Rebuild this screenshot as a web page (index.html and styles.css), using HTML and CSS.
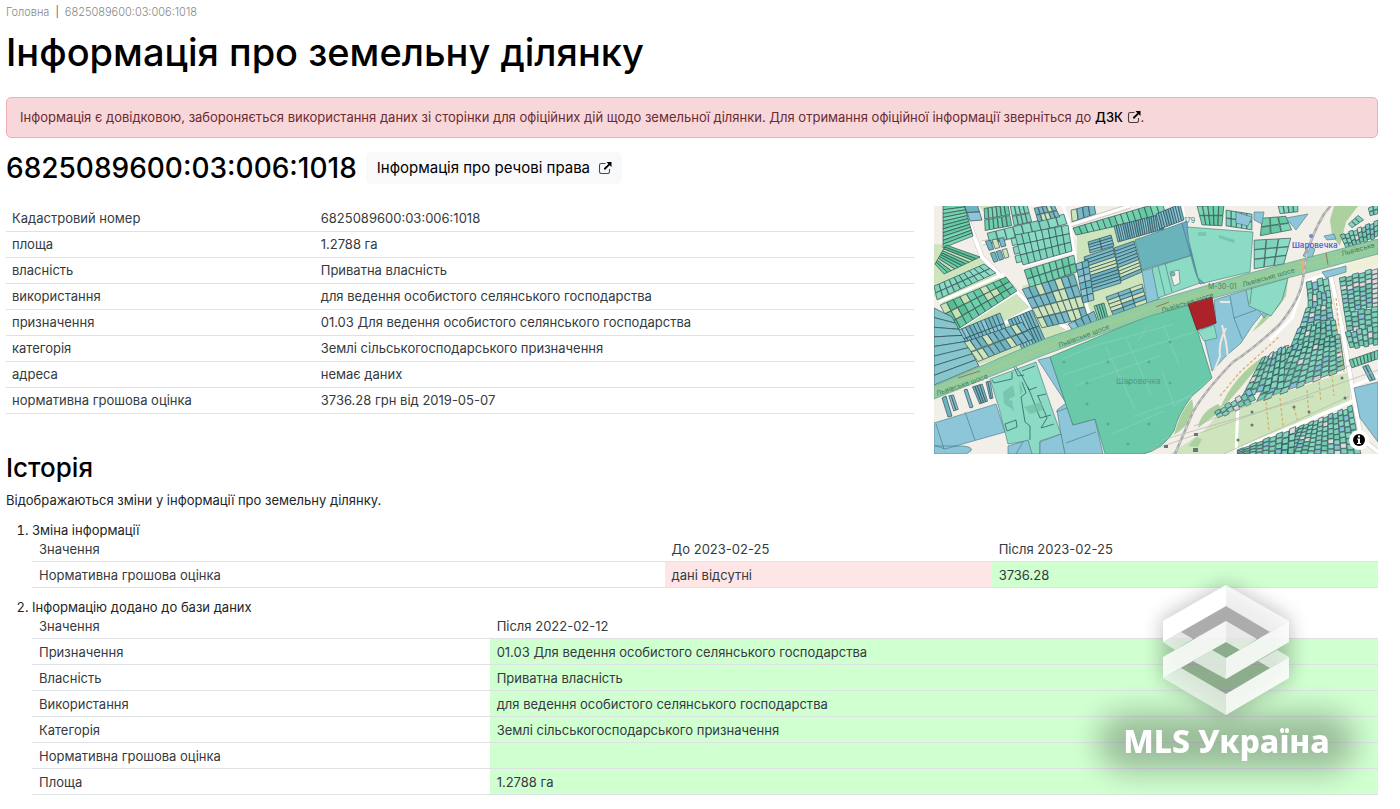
FILE: index.html
```html
<!DOCTYPE html>
<html lang="uk">
<head>
<meta charset="utf-8">
<title>Інформація про земельну ділянку</title>
<link rel="stylesheet" href="styles.css">
</head>
<body>
<svg class="sprite" aria-hidden="true"><symbol id="external" viewBox="0 0 14 14"><path d="M7.5 2.500H3.200Q1.500 2.500 1.500 4.200V10.800Q1.500 12.500 3.200 12.500H9.800Q11.500 12.500 11.500 10.800V8" fill="none" stroke="currentColor" stroke-width="1.100" opacity=".7"/><path d="M8.500 1H13.500V6L11.700 4.200L7 8.900L5.700 7.600L10.400 2.900Z" fill="currentColor"/></symbol></svg>
<nav class="crumbs"><a href="#">Головна</a><span class="bar">|</span><span>6825089600:03:006:1018</span></nav>
<main>
<h1>Інформація про земельну ділянку</h1>
<div class="alert" role="alert">Інформація є довідковою, забороняється використання даних зі сторінки для офіційних дій щодо земельної ділянки. Для отримання офіційної інформації зверніться до <a href="#">ДЗК <svg class="ext"><use href="#external"/></svg></a>.</div>
<div class="heading"><h2>6825089600:03:006:1018</h2><a class="button" href="#">Інформація про речові права <svg class="ext"><use href="#external"/></svg></a></div>
<div class="overview">
<div class="col">
<table class="facts">
<tr><th scope="row">Кадастровий номер</th><td>6825089600:03:006:1018</td></tr>
<tr><th scope="row">площа</th><td>1.2788 га</td></tr>
<tr><th scope="row">власність</th><td>Приватна власність</td></tr>
<tr><th scope="row">використання</th><td>для ведення особистого селянського господарства</td></tr>
<tr><th scope="row">призначення</th><td>01.03 Для ведення особистого селянського господарства</td></tr>
<tr><th scope="row">категорія</th><td>Землі сільськогосподарського призначення</td></tr>
<tr><th scope="row">адреса</th><td>немає даних</td></tr>
<tr><th scope="row">нормативна грошова оцінка</th><td>3736.28 грн від 2019-05-07</td></tr>
</table>
</div>
<div class="col">
<div class="map">
<svg class="canvas" viewBox="0 0 444 248" preserveAspectRatio="xMidYMid slice" role="img" aria-label="Карта земельних ділянок">
<rect width="444" height="248" fill="#f2efe9"/>
<g fill="#cde4bd">
<path d="M0 38L12 39L48 51L99 102L133 122L113 138L40 160L20 110L0 90Z"/>
<path d="M143 28L200 10L226 94L150 124L136 112L128 90L100 100L88 80L143 66Z"/>
<path d="M286 206L319 197L403 169L416 166L416 194L359 219L303 242L290 248H236L269 226Z"/>
<path d="M44 -1H60L50 6Z"/><path d="M400 72L396 66L444 48V58L410 68Z" fill="#eef0d5"/>
</g>
<g fill="#add19e">
<path d="M400 0H424L412 16L406 40L398 30L396 14Z"/><path d="M354 74L352 90Q340 110 318 126Q340 98 346 80Z"/>
<path d="M286 202Q300 170 330 150L326 158Q300 190 290 200Z"/><path d="M258 193Q264 214 240 229Q246 205 258 193ZM264 222Q266 206 284 198L290 204Q276 212 264 222ZM254 240L262 231L268 233L264 241Z"/>
</g>
<g fill="none" stroke="#fff" stroke-linejoin="round">
<g stroke="#cfc8c2" stroke-width="5"><path d="M28 -2L48 51L99 102L133 122"/><path d="M48 37L136 19L196 0"/><path d="M396 67L408 121L419 186L427 232L444 246"/></g>
<g stroke-width="4"><path d="M28 -2L48 51L99 102L133 122M99 102L71 117"/><path d="M396 67L408 121L419 186L427 232L444 246"/></g>
<g stroke-width="3"><path d="M48 37L136 19L196 0M129 0L136 20L143 67L158 117M88 60L140 45M5 96L70 68M20 125L84 85M248 0L254 40M444 33L396 67L370 76L358 112L336 134M419 180L444 170M303 244L419 195M302 248L304 198M329 184L334 150"/></g>
</g>
<g id="parcels" stroke="#26434a" stroke-width=".7" stroke-opacity=".9"></g>
<g stroke="#46727c" stroke-width=".6" fill="#8cc6d8">
<path d="M201 34L248 17L259 49L208 64Z" fill="#69b4ba"/><path d="M208 65L219 62L225 93L213 97Z"/>
<path d="M218 62L259 49L266 77L224 92Z" fill="#8cdbc4"/><path d="M224 60L231 89M231 57L238 86" fill="none"/>
<path d="M236 66L245 64L246 77L240 80Z" fill="#f2efe9"/><circle cx="239" cy="68" r="2" fill="#6ac9a9"/>
<path d="M248 17L253 15L257 46L264 70L271 77L266 78L261 65Z" fill="#6da9c6"/>
<path d="M253 21L319 26L316 66L270 77L264 72L255 36Z" fill="#8cdbc4"/>
<path d="M280 94L312 84L330 112L345 92L350 80L318 120L307 137L292 150L278 165L268 123L282 117Z"/>
<path d="M312 84L354 72L348 94L337 110L315 100Z" fill="#8cdbc4"/>
<path d="M296 90L300 112L322 104M300 112L308 133M318 80L316 98" fill="none"/>
<path d="M0 217L62 198L71 226L11 243L0 239ZM31 206L41 234M2 218L10 243M0 240H30Q44 242 32 248H0Z"/>
<path d="M104 154L116 151L139 219L161 213L169 248H130L123 204L132 197ZM132 237L162 226M122 206L133 202"/>
<path d="M56 173L102 156L117 200L127 228L106 235V248H97L93 235L74 238L65 202Z" fill="#8cdbc4"/><path d="M74 240L94 234L98 248H74ZM82 248L89 236M106 236L127 228L131 248H106Z"/>
<path d="M420 182L444 176V212L444 236L426 212Z"/>
<path d="M320 6H330L328 18L320 14ZM352 12L374 8L362 24ZM369 50L374 40L381 43L378 52ZM390 30L400 28L402 33L393 34ZM302 6L318 11L314 20L302 17ZM388 66L412 60V66L392 72Z"/>
</g>
<g fill="none" stroke="#2d6463" stroke-width=".8"><path d="M58 174L60 177L78 173V166M80 161L84 170L90 169M80 158L88 170M88 170L95 184L103 181M88 176L92 187L87 191L91 216L96 220L96 234M94 181L106 212L117 209M104 190L113 212L107 222L120 218M103 190L112 188M88 165L101 160M71 218L82 214L83 221L73 225Z"/></g>
<g fill="#70bda5" opacity=".7"><path d="M69 186L79 179L81 190L75 193L80 204L70 198ZM85 174L89 185L86 189ZM90 201L108 196L109 204L96 208ZM72 196L78 194L80 206ZM285 29L301 34L300 37L285 32ZM264 26H272V30H264Z"/></g>
<path d="M116 151L216 109L254 98L263 123L278 172Q270 180 258 190Q244 208 240 225Q228 244 209 248H171L161 213L139 219Z" fill="#6ac9a9" stroke="#47867a" stroke-width=".7"/>
<g stroke="#9bdcc6" stroke-width=".6" fill="none" opacity=".7"><path d="M128 153L160 140L240 118M129 169L260 126M140 180L225 150M171 140L201 203M192 132L217 188M204 136L213 120M178 228L230 205M201 210L258 190M230 120L245 160M228 165L240 200L276 174"/></g>
<g fill="#54ad91"><circle cx="130" cy="156" r="1.500"/><circle cx="153" cy="177" r="1.500"/><circle cx="174" cy="156" r="1.500"/><circle cx="195" cy="177" r="1.500"/><circle cx="153" cy="198" r="1.500"/><circle cx="174" cy="218" r="1.500"/><circle cx="215" cy="156" r="1.500"/><circle cx="236" cy="177" r="1.500"/><circle cx="236" cy="136" r="1.500"/><circle cx="215" cy="218" r="1.500"/><circle cx="194" cy="238" r="1.500"/></g>
<path d="M0 180L113 132L216 96L316 67L444 33V48L316 82L216 110L113 148L0 193Z" fill="#90cda3" stroke="#5f9177" stroke-width=".6"/>
<path d="M0 186L113 140L216 103L316 74L444 40" fill="none" stroke="#a4cc8f" stroke-width="3" opacity=".7"/>
<path d="M366 57L370 56L368 66" fill="none" stroke="#e9b36b" stroke-width="2"/><path d="M24 172L46 165M222 101L235 96M392 47L394 59" fill="none" stroke="#8b6549" stroke-width=".8"/>
<path d="M398 -2L390 8Q378 28 373 48L368 78Q364 96 345 119Q318 144 299 156Q270 186 259 206L241 248" fill="none" stroke="#aaa" stroke-width="2.500"/>
<path d="M398 -2L390 8Q378 28 373 48L368 78Q364 96 345 119Q318 144 299 156Q270 186 259 206L241 248" fill="none" stroke="#dedede" stroke-width="1" stroke-dasharray="4 4"/>
<path d="M254 98L278 91L282 117L263 124Z" fill="#ab2328" stroke="#6a2125" stroke-width=".8"/>
<path d="M264 125L280 119L283 132L270 135Z" fill="#8cdbc4" stroke="#47867a" stroke-width=".6"/>
<path d="M292 122Q284 138 286 150L280 165M288 119L292 136L294 152M286 96H296" fill="none" stroke="#eee7db" stroke-width="2"/>
<g fill="none" stroke="#b5b9aa" stroke-width=".7"><path d="M218 244L444 164M260 220L420 158M228 234L380 190M290 248L416 190"/></g>
<g fill="none" stroke="#dcad65" stroke-width="1.200" stroke-dasharray="3 2"><path d="M332 196L335 226M346 192L349 220M360 202L364 216M373 184L375 210M385 176L387 196M398 168L400 190M402 120L410 166M286 190L306 166L346 130M402 92L405 121"/></g>
<g fill="#66757a"><circle cx="318" cy="206" r="1.500"/><circle cx="318" cy="219" r="1.500"/><circle cx="360" cy="201" r="1.500"/><circle cx="375" cy="206" r="1.500"/><circle cx="408" cy="172" r="1.500"/><circle cx="411" cy="192" r="1.500"/><circle cx="304" cy="234" r="1.500"/><path d="M260 227h4v3h-4zM230 239h4v3h-4zM259 242h5v4h-5z"/></g>
<g class="place"><text x="358" y="42" class="station">Шаровечка</text><text x="182" y="178" class="village">Шаровечка</text><text x="274" y="83">М-30-01</text><text x="250" y="17">179</text></g>
<g class="street"><text transform="translate(3 190) rotate(-19)">Львівське шосе</text><text transform="translate(125 142) rotate(-21)">Львівське шосе</text><text transform="translate(228 107) rotate(-17)">Львівське шосе</text><text transform="translate(309 81) rotate(-16)">Львівське шосе</text><text transform="translate(408 50) rotate(-15)">Львівське</text></g>
<circle cx="377" cy="30" r="2" fill="#7785dc"/>
</svg>
<button class="info" type="button" aria-label="Про карту"><svg viewBox="0 0 20 20"><circle cx="10" cy="10" r="6"/><path d="M9 5.500h2v2H9zM8 8.500h3v4.500h1v1H8v-1h1V9.500H8z" fill="#fff"/></svg></button>
</div>
</div>
</div>
<section class="history">
<h3>Історія</h3>
<p>Відображаються зміни у інформації про земельну ділянку.</p>
<ol>
<li><div class="title">Зміна інформації</div>
<table class="three">
<tr><th scope="col">Значення</th><th scope="col">До 2023-02-25</th><th scope="col">Після 2023-02-25</th></tr>
<tr><td>Нормативна грошова оцінка</td><td class="old">дані відсутні</td><td class="new">3736.28</td></tr>
</table></li>
<li><div class="title">Інформацію додано до бази даних</div>
<table class="two">
<tr><th scope="col">Значення</th><th scope="col">Після 2022-02-12</th></tr>
<tr><td>Призначення</td><td class="new">01.03 Для ведення особистого селянського господарства</td></tr>
<tr><td>Власність</td><td class="new">Приватна власність</td></tr>
<tr><td>Використання</td><td class="new">для ведення особистого селянського господарства</td></tr>
<tr><td>Категорія</td><td class="new">Землі сільськогосподарського призначення</td></tr>
<tr><td>Нормативна грошова оцінка</td><td class="new"></td></tr>
<tr><td>Площа</td><td class="new">1.2788 га</td></tr>
</table></li>
</ol>
</section>
</main>
<aside class="brand">
<svg class="mark" viewBox="0 0 310 160" aria-hidden="true">
<path class="glow" d="M136 14L200 50V108L136 145L72 108V50Z"/>
<path d="M136 36L181 62L167 69L136 51L103 69L91 62ZM122 80L136 72L150 80L136 88ZM91 98L103 91L136 109L168 91L180 98L136 124Z" opacity=".1"/>
<g fill="#fff">
<path d="M136 15V36L73 72V51Z"/>
<path d="M136 15V36L180 62L199 51Z" opacity=".72"/>
<path d="M199 51V72L136 109V88Z" opacity=".85"/>
<path d="M136 51V72L73 108V87Z" opacity=".85"/>
<path d="M73 72L91 62L103 69L85 80Z" opacity=".6"/>
<path d="M136 51L167 69L150 80L136 72Z" opacity=".65"/>
<path d="M122 80L136 88V109L103 91Z" opacity=".6"/>
<path d="M187 80L199 87L180 98L168 91Z" opacity=".6"/>
<path d="M73 108L91 98L136 124V145Z" opacity=".6"/>
<path d="M199 87V108L136 145V124Z" opacity=".85"/>
</g>
</svg>
<div class="name">MLS Україна</div>
</aside>
<script src="map.js"></script>
</body>
</html>
```
FILE: styles.css
```css
* { box-sizing: border-box; }
body { margin: 0; padding: 4px 22px 12px 6px; background: #fff; color: #343a40; font: 400 13px/18px Inter, "Noto Sans", sans-serif; }
a { color: inherit; text-decoration: none; }
h1, h2, h3 { margin: 0; font-weight: 500; color: #000; }
p, ol { margin: 0; color: #212529; }
.sprite { display: none; }
.crumbs { font-size: 11px; font-weight: 300; line-height: 16px; color: #888; }
.bar { margin: 0 6px; color: #333; }
h1 { margin-top: 8px; font-size: 38px; line-height: 48px; }
.alert { margin-top: 21px; padding: 10px 13px; border: 1px solid #f1aeb5; border-radius: 5px; background: #f8d7da; color: #6a2b32; line-height: 19px; }
.alert a { color: #000; font-weight: 500; }
.ext { width: 14px; height: 14px; vertical-align: -2px; }
.heading { display: flex; align-items: center; gap: 9px; margin-top: 14px; }
h2 { font-size: 28px; line-height: 32px; }
.button { padding: 7px 10px 7px 11px; border-radius: 5px; background: #f8f9fa; color: #000; font-size: 15px; line-height: 18px; }
.button .ext { margin-left: 4px; }
.overview { display: grid; grid-template-columns: 2fr 1fr; margin: 22px -20px 0 0; }
.col { padding-right: 20px; min-width: 0; }
table { width: 100%; border-collapse: separate; border-spacing: 0; table-layout: fixed; }
th, td { height: 26px; padding: 3px 7px; border-bottom: 1px solid #dee2e6; text-align: left; font-weight: 400; line-height: 18px; color: #343a40; }
.facts th, .facts td { padding: 2px 6px 4px; }
.facts th { width: 34%; }
.map { position: relative; height: 248px; overflow: hidden; }
.canvas { display: block; width: 100%; height: 100%; }
.info { position: absolute; right: 9px; bottom: 4px; width: 20px; height: 20px; padding: 0; border: 0; border-radius: 50%; background: #fff; }
.info svg { display: block; width: 20px; height: 20px; }
.place, .street { font: 7px Inter, sans-serif; fill: #4b8270; }
.place .station { fill: #5263ce; font-weight: 600; font-size: 8px; }
.place .village { fill: #4d9d87; font-size: 8px; }
.street { fill: #3f8062; }
.history h3 { margin-top: -2px; font-size: 26px; line-height: 32px; }
.history p { margin-top: 7px; line-height: 18px; }
ol { padding-left: 26px; margin-top: 12px; }
li { margin-bottom: 10px; }
.title { line-height: 12px; }
.three th:first-child { width: 47%; }
.three th:nth-child(2) { width: 24.3%; }
.two th:first-child { width: 34%; }
.old { background: #ffe6e6; }
.new { background: #d0ffd0; }
.brand { position: fixed; right: 0; bottom: 0; width: 310px; height: 239px; pointer-events: none; }
.mark { display: block; width: 100%; overflow: visible; }
.glow { fill: #000; opacity: .25; filter: blur(10px); }
.name { position: relative; margin: -7px 37px 0 0; color: #fff; text-align: center; font: 800 32px/36px "Noto Sans", sans-serif; }
.name::before { content: ""; position: absolute; z-index: -1; inset: -10px 8px -12px 8px; border-radius: 40px; background: #000; opacity: .26; filter: blur(15px); }
```
FILE: map.js
```js
const teal = ['#8cdbc4', '#7fd3bb', '#86d8c1'];
const mixed = ['#7fd3bb', '#73cbb2', '#86d8c1', '#7fd3bb', '#73cbb2', '#86d8c1', '#7fd3bb', '#73cbb2', '#86d8c1', '#84bfd8', '#dcdcd8'];
const green = ['#70d0ab', '#7ed6b5', '#65c9a2'];
const blue = ['#79b9c8', '#6fb2c0', '#8cc6d8'];
const leaf = ['#70d0ab', '#65c9a2', '#c9e2b5', '#55bf92'];
const gaps = ['#79b9c8', '#6fb2c0', '#cde4bd', '#79b9c8'];

// Corners clockwise from the top left, then columns, rows, colours and the inset between parcels.
const blocks = [
  [[9,0,30,-2,39,30,9,42], 1, 11, green, 0],
  [[30,-2,43,-2,48,14,36,15], 1, 2, blue, 0],
  [[50,2,74,-2,78,20,51,25], 6, 2, green, 0.04],
  [[76,0,93,-2,98,16,80,20], 4, 2, teal, 0.04],
  [[53,27,130,8,133,18,56,38], 9, 1, teal, 0.02],
  [[50,34,70,30,76,52,60,58], 3, 2, gaps, 0.12],
  [[76,32,84,30,90,56,82,58], 1, 3, teal, 0.1],
  [[81,29,134,19,138,45,89,59], 8, 3, teal, 0],
  [[90,64,140,49,143,66,96,82], 8, 2, green, 0.02],
  [[100,2,120,-2,126,11,104,16], 5, 2, gaps, 0.04],
  [[137,4,160,-2,162,8,138,16], 4, 1, gaps, 0.02],
  [[1,58,12,39,46,51,10,68], 10, 1, leaf, 0],
  [[0,80,50,58,62,67,3,94], 10, 2, teal, 0.02],
  [[6,99,72,71,83,85,20,126], 10, 3, leaf, 0.02],
  [[20,126,66,107,74,128,30,143], 12, 2, blue, 0],
  [[74,114,98,104,112,136,88,143], 8, 2, blue, 0],
  [[0,102,18,111,45,160,0,179], 1, 8, ['#88c6ce'], 0],
  [[30,136,88,116,100,133,44,156], 10, 2, gaps, 0.03],
  [[88,83,140,68,154,112,108,122], 8, 4, gaps, 0.02],
  [[139,22,228,-4,232,9,142,29], 15, 1, green, 0],
  [[180,20,228,8,230,23,184,36], 22, 1, blue, 0],
  [[154,36,177,29,180,40,156,47], 2, 4, blue, 0],
  [[150,51,179,41,187,77,158,86], 1, 11, gaps, 0],
  [[180,42,200,35,208,66,187,75], 1, 10, gaps, 0],
  [[142,58,154,54,160,94,149,97], 2, 6, blue, 0],
  [[172,91,208,78,213,97,179,109], 3, 5, gaps, 0],
  [[160,100,170,97,174,112,165,115], 4, 1, green, 0],
  [[134,118,160,105,164,116,140,126], 4, 1, blue, 0.02],
  [[222,8,246,-2,250,14,226,23], 10, 1, blue, 0],
  [[263,0,290,-1,288,20,268,19], 5, 2, green, 0.02],
  [[292,4,318,8,318,24,292,20], 5, 2, teal, 0.02],
  [[328,12,352,10,358,24,326,30], 3, 2, green, 0.03],
  [[320,34,357,32,350,58,320,63], 3, 3, teal, 0.02],
  [[344,0,364,-2,364,6,346,8], 4, 1, teal, 0.04],
  [[406,29,444,14,444,30,412,42], 9, 3, mixed, 0.02],
  [[414,18,424,9,430,14,418,22], 3, 1, teal, 0.05],
  [[434,2,444,-2,444,8,436,10], 2, 2, teal, 0.05],
  [[372,76,394,70,396,84,374,92], 4, 2, mixed, 0.03],
  [[374,87,396,84,398,98,374,102], 5, 2, mixed, 0.03],
  [[372,102,397,96,401,122,364,126], 5, 5, mixed, 0.04],
  [[405,72,444,61,444,100,410,106], 6, 8, mixed, 0.04],
  [[410,106,444,100,444,122,413,125], 5, 4, mixed, 0.04],
  [[364,122,401,112,406,138,352,152], 8, 5, mixed, 0.04],
  [[350,140,406,128,411,163,322,196], 11, 8, mixed, 0.05],
  [[328,152,352,138,350,180,308,190], 6, 6, mixed, 0.05],
  [[280,206,316,182,322,194,284,212], 7, 2, mixed, 0.06],
  [[356,224,418,199,427,248,340,248], 13, 8, mixed, 0.04],
  [[303,244,362,220,360,248,303,249], 9, 4, mixed, 0.05],
  [[411,126,444,118,444,137,416,142], 6, 3, mixed, 0.04],
  [[415,154,444,144,444,153,418,162], 8, 1, green, 0.02],
  [[428,160,434,158,442,174,436,176], 2, 1, blue, 0.05],
  [[8,192,12,190,18,210,14,211], 1, 1, blue, 0],
  [[14,188,19,187,25,205,20,207], 2, 1, blue, 0.1],
  [[30,184,33,183,39,201,36,202], 1, 1, blue, 0],
  [[38,180,48,177,54,196,46,199], 4, 1, blue, 0.05],
  [[52,176,56,175,59,192,56,193], 2, 1, blue, 0]
];

const parcels = document.getElementById('parcels');

function pointIn(quad, u, v) {
  const [ax, ay, bx, by, cx, cy, dx, dy] = quad;
  const x = (ax * (1 - u) + bx * u) * (1 - v) + (dx * (1 - u) + cx * u) * v;
  const y = (ay * (1 - u) + by * u) * (1 - v) + (dy * (1 - u) + cy * u) * v;
  return x.toFixed(1) + ',' + y.toFixed(1);
}

blocks.forEach(([quad, cols, rows, colours, inset], index) => {
  for (let row = 0; row < rows; row++) {
    for (let col = 0; col < cols; col++) {
      const pick = (row * 7 + col * 5 + row * col * 3 + index) % 11;
      // Alternate columns step down slightly, as neighbouring plots rarely line up.
      const step = colours === mixed && col % 2 ? 0.3 : 0;
      const left = (col + inset) / cols, right = (col + 1 - inset) / cols;
      const top = (row + inset + step) / rows, bottom = (row + 1 - inset + step) / rows;
      const parcel = document.createElementNS('http://www.w3.org/2000/svg', 'polygon');
      parcel.setAttribute('points', [pointIn(quad, left, top), pointIn(quad, right, top), pointIn(quad, right, bottom), pointIn(quad, left, bottom)].join(' '));
      parcel.setAttribute('fill', colours[pick % colours.length]);
      parcels.append(parcel);
    }
  }
});
```
